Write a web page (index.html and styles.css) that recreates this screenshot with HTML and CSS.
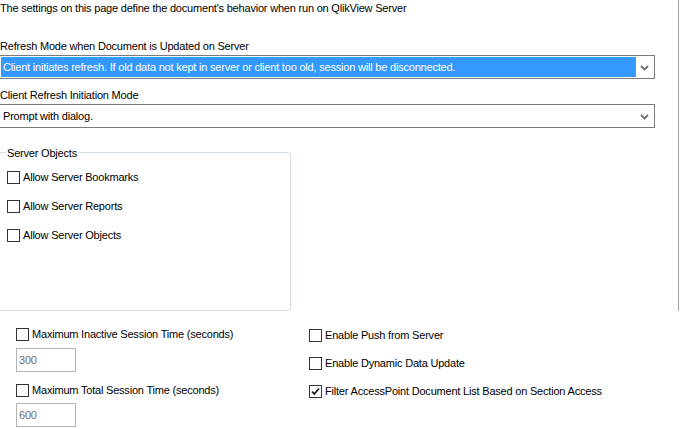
FILE: index.html
```html
<!DOCTYPE html>
<html>
<head>
<meta charset="utf-8">
<link rel="stylesheet" href="styles.css">
</head>
<body>
<div class="page">
  <div class="top">
    <div class="top-main">
      <div class="intro">The settings on this page define the document's behavior when run on QlikView Server</div>
      <div class="field-label first">Refresh Mode when Document is Updated on Server</div>
      <div class="combo">
        <div class="combo-value selected">Client initiates refresh. If old data not kept in server or client too old, session will be disconnected.</div>
        <div class="combo-arrow"><svg width="9" height="6" viewBox="0 0 9 6"><polyline points="1,1 4.5,4.5 8,1" fill="none" stroke="#6e6e6e" stroke-width="1.8"/></svg></div>
      </div>
      <div class="field-label second">Client Refresh Initiation Mode</div>
      <div class="combo">
        <div class="combo-value">Prompt with dialog.</div>
        <div class="combo-arrow"><svg width="9" height="6" viewBox="0 0 9 6"><polyline points="1,1 4.5,4.5 8,1" fill="none" stroke="#6e6e6e" stroke-width="1.8"/></svg></div>
      </div>
      <div class="group">
        <div class="group-title">Server Objects</div>
        <div class="group-rows">
          <label class="check"><span class="box"></span><span>Allow Server Bookmarks</span></label>
          <label class="check"><span class="box"></span><span>Allow Server Reports</span></label>
          <label class="check"><span class="box"></span><span>Allow Server Objects</span></label>
        </div>
      </div>
    </div>
    <div class="rule"></div>
  </div>
  <div class="bottom">
    <div class="col-left">
      <label class="check"><span class="box"></span><span>Maximum Inactive Session Time (seconds)</span></label>
      <div class="num-input first-input">300</div>
      <label class="check second-check"><span class="box"></span><span>Maximum Total Session Time (seconds)</span></label>
      <div class="num-input second-input">600</div>
    </div>
    <div class="col-right">
      <label class="check"><span class="box"></span><span>Enable Push from Server</span></label>
      <label class="check"><span class="box"></span><span>Enable Dynamic Data Update</span></label>
      <label class="check"><span class="box checked"><svg width="11" height="11" viewBox="0 0 11 11"><polyline points="2,5.5 4.3,8 9,2.5" fill="none" stroke="#1a1a1a" stroke-width="1.8"/></svg></span><span>Filter AccessPoint Document List Based on Section Access</span></label>
    </div>
  </div>
</div>
</body>
</html>
```

FILE: styles.css
```css
html, body {
  margin: 0;
  padding: 0;
  background: #ffffff;
}

.page {
  width: 680px;
  height: 429px;
  overflow: hidden;
  font-family: "Liberation Sans", Arial, sans-serif;
  font-size: 11px;
  line-height: 13px;
  color: #000000;
  letter-spacing: -0.2px;
}

.top {
  display: flex;
}

.top-main {
  width: 678px;
  display: flex;
  flex-direction: column;
  align-items: flex-start;
}

.rule {
  width: 1px;
  background: #a0a0a0;
}

.intro {
  margin-top: 2px;
  white-space: nowrap;
}

.field-label {
  white-space: nowrap;
}

.field-label.first {
  margin-top: 25px;
}

.field-label.second {
  margin-top: 10px;
}

.combo {
  margin-top: 2px;
  margin-left: -1px;
  width: 656px;
  height: 24px;
  box-sizing: border-box;
  border: 1px solid #7a7a7a;
  padding: 1px;
  display: flex;
  align-items: stretch;
}

.combo-value {
  width: 635px;
  box-sizing: border-box;
  padding-left: 2px;
  display: flex;
  align-items: center;
  white-space: nowrap;
}

.combo-value.selected {
  background: #3399ff;
  color: #ffffff;
  outline: 1px dotted #e07b1a;
  outline-offset: -1px;
}

.combo-arrow {
  flex: 1;
  display: flex;
  align-items: center;
  justify-content: center;
  padding-top: 1px;
}

.group {
  margin-top: 24px;
  margin-left: -3px;
  width: 294px;
  height: 159px;
  box-sizing: border-box;
  border: 1px solid #d5dfe5;
  border-radius: 3px;
  display: flex;
  flex-direction: column;
  align-items: flex-start;
}

.group-title {
  margin-top: -6px;
  margin-left: 8px;
  padding: 0 1px;
  background: #ffffff;
  white-space: nowrap;
}

.group-rows {
  margin-top: 11px;
  margin-left: 9px;
  display: flex;
  flex-direction: column;
  gap: 16px;
}

.check {
  display: flex;
  align-items: center;
  gap: 3px;
  height: 13px;
  white-space: nowrap;
}

.box {
  width: 13px;
  height: 13px;
  box-sizing: border-box;
  border: 1px solid #333333;
  background: #ffffff;
  flex: none;
  display: flex;
  align-items: center;
  justify-content: center;
}

.box svg {
  display: block;
}

.bottom {
  display: flex;
}

.col-left {
  margin-left: 16px;
  margin-top: 17px;
  width: 293px;
  display: flex;
  flex-direction: column;
  align-items: flex-start;
}

.num-input {
  width: 60px;
  height: 24px;
  box-sizing: border-box;
  border: 1px solid #b4b4b4;
  color: #6d6d6d;
  padding-left: 2px;
  display: flex;
  align-items: center;
}

.first-input {
  margin-top: 7px;
}

.second-check {
  margin-top: 12px;
}

.second-input {
  margin-top: 6px;
}

.col-right {
  margin-top: 18px;
  display: flex;
  flex-direction: column;
  gap: 15px;
}
```
